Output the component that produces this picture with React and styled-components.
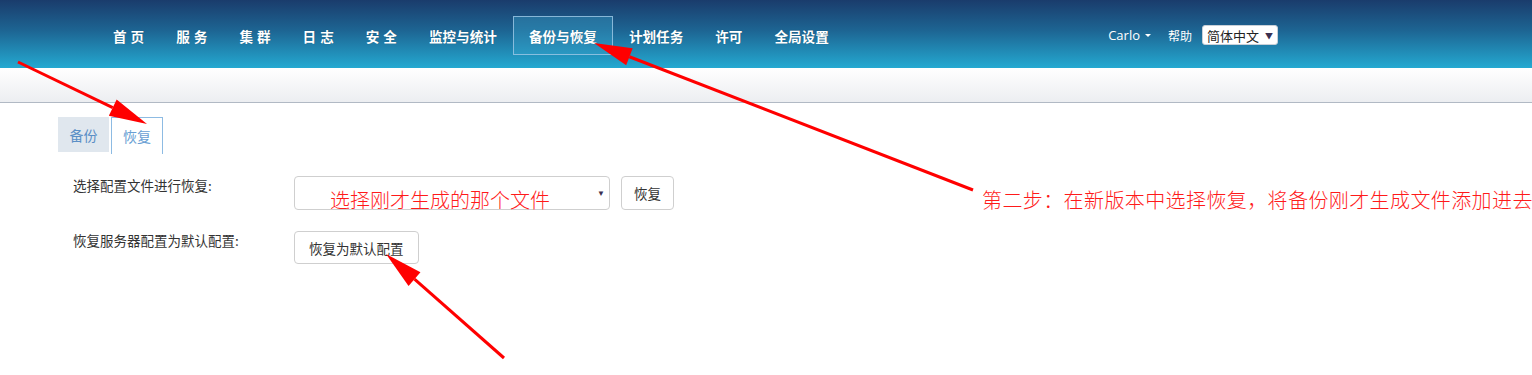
import styled, { createGlobalStyle } from "styled-components";

const GlobalStyle = createGlobalStyle`
  body {
    margin: 0;
    background: #fff;
    font-family: "Liberation Sans", "Noto Sans CJK SC", sans-serif;
  }
`;

const Page = styled.div`
  position: relative;
  width: 1532px;
  height: 375px;
  overflow: hidden;
`;

const Header = styled.div`
  height: 68px;
  display: flex;
  align-items: center;
  padding-left: 97px;
  box-sizing: border-box;
  background: linear-gradient(to bottom, #1a3c6c 0%, #1d6593 45%, #24a9d1 100%);
`;

const Nav = styled.div`
  display: flex;
  align-items: center;
  height: 39px;
  margin-top: 3px;
`;

const NavItem = styled.div`
  display: flex;
  align-items: center;
  height: 39px;
  padding: 0 15px;
  color: #fff;
  font-family: "Noto Sans CJK SC", sans-serif;
  font-size: 13.6px;
  font-weight: 700;
  letter-spacing: ${(p) => (p.wide ? "4px" : "0")};
  margin-right: ${(p) => (p.wide ? "-4px" : "0")};
  text-shadow: 0 0 1px rgba(0, 0, 0, 0.3);
  border: 1px solid ${(p) => (p.active ? "rgba(160, 200, 230, 0.8)" : "transparent")};
  background: ${(p) => (p.active ? "rgba(60, 170, 210, 0.35)" : "transparent")};
  box-sizing: border-box;
`;

const Right = styled.div`
  margin-left: auto;
  margin-right: 254px;
  display: flex;
  align-items: center;
  margin-top: 2px;
`;

const User = styled.span`
  color: #fff;
  font-family: "Open Sans", sans-serif;
  font-size: 13px;
  display: flex;
  align-items: center;
  gap: 5px;
`;

const Caret = styled.span`
  width: 0;
  height: 0;
  border-left: 3px solid transparent;
  border-right: 3px solid transparent;
  border-top: 3px solid ${(p) => p.color || "#fff"};
`;

const Help = styled.span`
  color: #fff;
  font-family: "Noto Sans CJK SC", sans-serif;
  font-size: 12px;
  margin-left: 17px;
`;

const Lang = styled.div`
  margin-left: 10px;
  width: 76px;
  height: 20px;
  box-sizing: border-box;
  background: #fff;
  border: 1px solid #c8d0d8;
  border-radius: 3px;
  display: flex;
  align-items: center;
  padding: 0 4px;
  font-family: "Noto Sans CJK SC", sans-serif;
  font-size: 13px;
  color: #222;
  justify-content: space-between;
`;

const SmallArrow = styled.span`
  font-size: 8px;
  color: #3a3050;
`;

const SubBar = styled.div`
  height: 34px;
  background: linear-gradient(to bottom, #ffffff 0%, #eceef1 100%);
  border-bottom: 1px solid #b1b9c4;
`;

const Tabs = styled.div`
  display: flex;
  align-items: flex-start;
  gap: 2px;
  padding-left: 58px;
  margin-top: 14px;
`;

const Tab = styled.div`
  width: ${(p) => (p.active ? "52px" : "51px")};
  height: ${(p) => (p.active ? "37px" : "35px")};
  box-sizing: border-box;
  display: flex;
  align-items: center;
  justify-content: center;
  font-family: "Noto Sans CJK SC", sans-serif;
  font-size: 14px;
  color: ${(p) => (p.active ? "#6a9fd4" : "#5b8fc6")};
  background: ${(p) => (p.active ? "#fff" : "#e0e7ee")};
  border: 1px solid ${(p) => (p.active ? "#8dbbe3" : "transparent")};
  border-bottom: none;
`;

const Form = styled.div`
  padding-left: 73px;
  margin-top: 22px;
  display: flex;
  flex-direction: column;
  gap: 21px;
`;

const Row = styled.div`
  display: flex;
  align-items: flex-start;
`;

const Label = styled.div`
  width: 221px;
  font-family: "Noto Sans CJK SC", sans-serif;
  font-size: 13.5px;
  line-height: 18px;
  color: #333;
`;

const Select = styled.div`
  width: 316px;
  height: 34px;
  box-sizing: border-box;
  border: 1px solid #cfcfcf;
  border-radius: 4px;
  display: flex;
  align-items: center;
  justify-content: flex-end;
  padding-right: 4px;
`;

const Button = styled.div`
  height: ${(p) => (p.tall ? "34px" : "33px")};
  margin-left: ${(p) => p.gap || "0"};
  padding: 0 ${(p) => p.pad || "12px"};
  box-sizing: border-box;
  border: 1px solid #cfcfcf;
  border-radius: 4px;
  display: flex;
  align-items: center;
  font-family: "Noto Sans CJK SC", sans-serif;
  font-size: 13.5px;
  color: #333;
  background: #fff;
`;

const Note = styled.div`
  position: absolute;
  top: ${(p) => p.top}px;
  left: ${(p) => p.left}px;
  font-family: "Noto Sans CJK SC", sans-serif;
  font-size: 20px;
  line-height: 24px;
  font-weight: 300;
  letter-spacing: ${(p) => p.spacing || "0"};
  color: #ff1a1a;
  white-space: nowrap;
`;

const Overlay = styled.svg`
  position: absolute;
  left: 0;
  top: 0;
  pointer-events: none;
`;

const Arrow = ({ x1, y1, x2, y2 }) => {
  const ang = Math.atan2(y2 - y1, x2 - x1);
  const len = 38;
  const half = 9;
  const bx = x2 - Math.cos(ang) * len;
  const by = y2 - Math.sin(ang) * len;
  const px = -Math.sin(ang) * half;
  const py = Math.cos(ang) * half;
  return (
    <g>
      <line x1={x1} y1={y1} x2={bx} y2={by} stroke="#ff0000" strokeWidth="3" />
      <polygon
        points={`${x2},${y2} ${bx + px},${by + py} ${bx - px},${by - py}`}
        fill="#ff0000"
      />
    </g>
  );
};

const navItems = [
  { t: "首页", wide: true },
  { t: "服务", wide: true },
  { t: "集群", wide: true },
  { t: "日志", wide: true },
  { t: "安全", wide: true },
  { t: "监控与统计" },
  { t: "备份与恢复", active: true },
  { t: "计划任务" },
  { t: "许可" },
  { t: "全局设置" },
];

export default function App() {
  return (
    <Page>
      <GlobalStyle />
      <Header>
        <Nav>
          {navItems.map((n) => (
            <NavItem key={n.t} active={n.active} wide={n.wide}>
              {n.t}
            </NavItem>
          ))}
        </Nav>
        <Right>
          <User>
            Carlo <Caret />
          </User>
          <Help>帮助</Help>
          <Lang>
            简体中文 <SmallArrow>▼</SmallArrow>
          </Lang>
        </Right>
      </Header>
      <SubBar />
      <Tabs>
        <Tab>备份</Tab>
        <Tab active>恢复</Tab>
      </Tabs>
      <Form>
        <Row>
          <Label>选择配置文件进行恢复:</Label>
          <Select>
            <SmallArrow>▼</SmallArrow>
          </Select>
          <Button tall gap="11px">恢复</Button>
        </Row>
        <Row>
          <Label>恢复服务器配置为默认配置:</Label>
          <Button pad="14px">恢复为默认配置</Button>
        </Row>
      </Form>

      <Note top={188} left={330}>选择刚才生成的那个文件</Note>
      <Note top={188} left={982} spacing="0.4px">
        第二步：在新版本中选择恢复，将备份刚才生成文件添加进去
      </Note>

      <Overlay width="1532" height="375">
        <Arrow x1={18} y1={62} x2={147} y2={124} />
        <Arrow x1={973} y1={190} x2={594} y2={43} />
        <Arrow x1={504} y1={358} x2={386} y2={254} />
      </Overlay>
    </Page>
  );
}
